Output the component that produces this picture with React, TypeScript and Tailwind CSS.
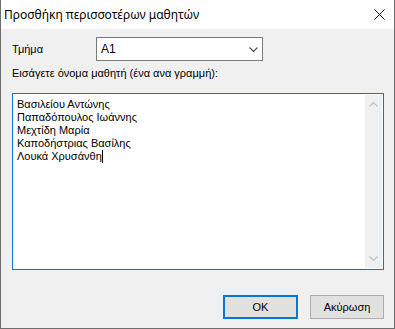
import { useState } from "react";

const students = [
  "Βασιλείου Αντώνης",
  "Παπαδόπουλος Ιωάννης",
  "Μεχτίδη Μαρία",
  "Καποδήστριας Βασίλης",
  "Λουκά Χρυσάνθη",
];

function Chevron({ up = false, className = "" }: { up?: boolean; className?: string }) {
  return (
    <svg width="9" height="5" viewBox="0 0 9 5" className={className}>
      <path
        d={up ? "M0.5 4.5 L4.5 0.5 L8.5 4.5" : "M0.5 0.5 L4.5 4.5 L8.5 0.5"}
        fill="none"
        stroke="currentColor"
        strokeWidth="1.2"
      />
    </svg>
  );
}

export default function App() {
  const [section] = useState("A1");

  return (
    <div
      className="w-[395px] h-[329px] flex flex-col bg-[#f0f0f0] border-x border-b border-[#6e6e6e] text-black"
      style={{ fontFamily: '"Liberation Sans", Arial, sans-serif' }}
    >
      {/* title bar */}
      <div className="h-[29px] bg-white flex items-center justify-between pl-[3px] pr-[9px]">
        <span className="text-[12px] leading-none" style={{ fontFamily: '"Noto Sans", "Liberation Sans", sans-serif' }}>
          Προσθήκη περισσοτέρων μαθητών
        </span>
        <svg width="11" height="11" viewBox="0 0 11 11">
          <path d="M0.5 0.5 L10.5 10.5 M10.5 0.5 L0.5 10.5" stroke="#111" strokeWidth="1" />
        </svg>
      </div>

      <div className="flex-1 flex flex-col pl-[11px] pr-[10px] text-[11px]">
        <div className="flex items-center mt-[8px] h-[24px]">
          <span className="w-[84px] pt-[1px]">Τμήμα</span>
          <div className="w-[167px] h-[24px] bg-white border border-[#7a7a7a] flex items-center justify-between pl-[4px] pr-[4px]">
            <span className="text-[12px]">{section}</span>
            <Chevron className="text-[#555]" />
          </div>
        </div>

        <div className="mt-[6px] leading-[13px]">Εισάγετε όνομα μαθητή (ένα ανα γραμμή):</div>

        <div className="mt-[13px] h-[177px] w-[372px] bg-white border border-[#0078d7] flex">
          <div className="flex-1 pl-[4px] pt-[4px] leading-[13px]">
            {students.map((s, i) => (
              <div key={s} className="flex items-center">
                <span>{s}</span>
                {i === students.length - 1 && <span className="w-px h-[13px] bg-black" />}
              </div>
            ))}
          </div>
          <div className="w-[17px] my-[1px] mr-[1px] bg-[#f0f0f0] flex flex-col items-center justify-between py-[7px] text-[#c2c2c2]">
            <Chevron up />
            <Chevron />
          </div>
        </div>

        <div className="mt-auto mb-[9px] flex justify-end gap-[12px]">
          <button className="w-[75px] h-[24px] bg-[#e1e1e1] border-2 border-[#0078d7] text-[11px]">OK</button>
          <button className="w-[74px] h-[24px] bg-[#e1e1e1] border border-[#adadad] text-[11px]">Ακύρωση</button>
        </div>
      </div>
    </div>
  );
}
